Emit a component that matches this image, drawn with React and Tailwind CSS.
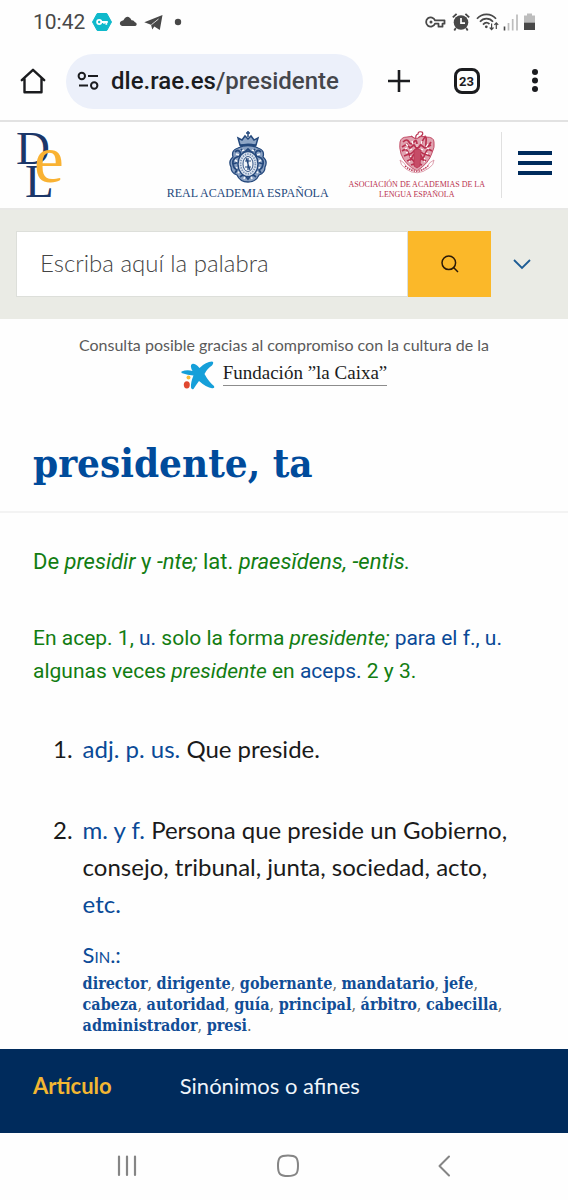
import React from "react";

const INK = "#484848";

function StatusBar() {
  return (
    <div className="flex h-11 items-center justify-between px-8 text-[#484848]">
      <div className="flex items-center gap-[7px]">
        <span className="pl-px font-['Roboto',sans-serif] text-[21px] leading-none">10:42</span>
        <svg width="20" height="20" viewBox="0 0 20 20" aria-hidden="true">
          <path d="M5.2 1.5h9.6L19.5 10l-4.7 8.5H5.2L.5 10z" fill="#0fb9cb" stroke="#0fb9cb" strokeLinejoin="round" />
          <circle cx="7.2" cy="10" r="2.1" fill="none" stroke="#fff" strokeWidth="1.8" />
          <path d="M9.4 10h6.4M14.3 10v2.7M12 10v1.8" fill="none" stroke="#fff" strokeWidth="1.8" />
        </svg>
        <svg width="18" height="20" viewBox="0 0 18 20" aria-hidden="true">
          <path d="M3 14A2.700 2.700 0 0 1 3 8.700Q4.500 8.800 5.500 6.500 8 3.500 11 6 12 7 12.500 8.300 15 8 15.700 10 18 10.500 17.700 12.500 17.300 14 15.800 14z" fill={INK} />
        </svg>
        <svg width="19" height="20" viewBox="0 0 19 20" aria-hidden="true">
          <path d="M.3 10.200 18.500 3 15.800 18 10.300 14.600 8.300 17.600 7 12.800z" fill={INK} />
          <path d="M7.300 12.800 14.500 7" stroke="#fff" strokeWidth=".8" fill="none" />
        </svg>
        <svg width="14" height="20" viewBox="0 0 14 20" aria-hidden="true">
          <circle cx="8" cy="10" r="3.200" fill={INK} />
        </svg>
      </div>
      <div className="flex items-center gap-1">
        <svg width="21" height="20" viewBox="0 0 21 20" aria-hidden="true">
          <path d="M10 8.300h9.500v3.400h-2v3h-4v-3H10A4.600 4.600 0 1 1 10 8.300z" fill="none" stroke={INK} strokeWidth="1.800" strokeLinejoin="round" />
          <circle cx="6" cy="10" r="1.500" fill={INK} />
        </svg>
        <svg width="22" height="20" viewBox="0 0 22 20" aria-hidden="true">
          <circle cx="11" cy="10.500" r="7.300" fill={INK} />
          <path d="M2.800 5.400 6.600 1.800M19.200 5.400 15.400 1.800M5.800 16 4.300 18.500M16.200 16l1.500 2.500" stroke={INK} strokeWidth="1.800" />
          <path d="M11 6v5.200h4" stroke="#fff" strokeWidth="1.700" fill="none" />
        </svg>
        <svg width="23" height="20" viewBox="0 0 23 20" aria-hidden="true">
          <path d="M1 6.800C6 .8 15 .8 20 6.800M4 9.800C7.500 5.600 13.500 5.600 17 9.800M7 12.600c2-2.300 4.500-2.300 6.500-.6" fill="none" stroke={INK} strokeWidth="1.700" />
          <circle cx="10.300" cy="14.800" r="1.400" fill={INK} />
          <path d="M15.600 11.500v6M13.700 15.500l1.900 2.100 1.900-2.100M20.300 17v-6M18.400 12.800l1.900-2 1.900 2" fill="none" stroke={INK} strokeWidth="1.200" />
        </svg>
        <svg width="16" height="20" viewBox="0 0 16 20" aria-hidden="true">
          <path d="M1.500 14.500v4" stroke={INK} strokeWidth="1.600" />
          <path d="M5.500 11v7.500M9.700 7v11.500M14 2.500v16" stroke="#bdbdbd" strokeWidth="1.700" />
        </svg>
        <svg width="13" height="20" viewBox="0 0 13 20" aria-hidden="true">
          <path d="M4 1.500h5v2h3V12H1V3.500h3z" fill="#bdbdbd" />
          <path d="M1 10.700h11v7.300H1z" fill={INK} />
        </svg>
      </div>
    </div>
  );
}

function BrowserBar() {
  return (
    <div className="flex h-[78px] items-center border-b-2 border-[#e2e2e2] pb-[2px] pl-5 pr-5 text-[#1b1c1f]">
      <button aria-label="Inicio" className="flex w-[46px] shrink-0">
        <svg width="26" height="28" viewBox="0 0 26 28" fill="none" stroke="currentColor" strokeWidth="2.400" strokeLinejoin="round" strokeLinecap="round">
          <path d="M1.800 13.200 13 2.800l11.200 10.400M4.500 11.500v13.700h17V11.500" />
        </svg>
      </button>
      <div className="flex h-[55px] min-w-0 flex-1 items-center gap-3 rounded-full bg-[#ecf0fa] pl-[11px]">
        <svg width="22" height="20" viewBox="0 0 22 20" fill="none" stroke="currentColor" strokeWidth="2" className="shrink-0" aria-hidden="true">
          <circle cx="4.800" cy="5" r="3.200" />
          <path d="M11 5h10M2 14.500h9" />
          <circle cx="17.200" cy="14.500" r="3.200" />
        </svg>
        <span className="whitespace-nowrap font-['Roboto',sans-serif] text-2xl font-medium">
          dle.rae.es<span className="text-[#44464b]">/presidente</span>
        </span>
      </div>
      <div className="flex w-[185px] shrink-0 items-center justify-between pl-6">
        <button aria-label="Nueva pestaña">
          <svg width="24" height="24" viewBox="0 0 24 24" stroke="currentColor" strokeWidth="2.600"><path d="M1 12h22M12 1v22" /></svg>
        </button>
        <button aria-label="Pestañas abiertas" className="flex size-[26px] items-center justify-center rounded-lg border-[3px] border-current font-['Roboto',sans-serif] text-[13px] font-bold leading-none">
          23
        </button>
        <button aria-label="Más opciones" className="flex w-[26px] justify-center">
          <svg width="8" height="24" viewBox="0 0 8 24" fill="currentColor"><circle cx="4" cy="3" r="3" /><circle cx="4" cy="11.500" r="3" /><circle cx="4" cy="20" r="3" /></svg>
        </button>
      </div>
    </div>
  );
}

function DleLogo() {
  return (
    <svg width="60" height="86" viewBox="0 0 60 86" role="img" aria-label="Diccionario de la lengua española" className="shrink-0 font-['Liberation_Serif',serif]">
      <text x="0" y="42" fontSize="47" fill="#1b3668">D</text>
      <text x="9" y="75" fontSize="47" fill="#1b3668">L</text>
      <text x="18" y="60" fontSize="67" fill="#f9b233">e</text>
    </svg>
  );
}

function RaeCrest() {
  return (
    <svg width="40" height="54" viewBox="0 0 40 54" aria-hidden="true" fill="none" stroke="#24487c">
      <path d="M20 1v6M18 3h4M12 15 10 8l4 2 3-4 3 3 3-3 3 4 4-2-2 7z" strokeWidth="1.500" fill="#8fa6c6" />
      <path d="M12 16q8-3 16 0" strokeWidth="2" />
      <path d="M10 18q-7 2-5 9-5 4-2 10 0 6 6 8 3 7 11 7t11-7q6-2 6-8 3-6-2-10 2-7-5-9-10-5-20 0z" fill="#8aa1c2" strokeWidth="1.300" />
      <path d="M7 22q3-3 5 0t-3 5-4 7 3 5-1 4M33 22q-3-3-5 0t3 5 4 7-3 5 1 4M12 47q4-4 8 2 4-6 8-2M5 34l6-2M35 34l-6-2M13 19l3 4 4-4 4 4 3-4" strokeWidth="1.800" />
      <path d="M8 24l3 1M7 30l3 2M8 38l3-1M32 24l-3 1M33 30l-3 2M32 38l-3-1M16 49l1-3M24 49l-1-3M14 21l2-1M26 21l-2-1M10 43l2-2M30 43l-2-2" stroke="#f1f4f9" strokeWidth="1.600" />
      <ellipse cx="20" cy="34" rx="10" ry="12.500" fill="#dbe3ee" strokeWidth="1.400" />
      <ellipse cx="20" cy="34" rx="7.400" ry="9.900" stroke="#7890b3" strokeWidth="1.700" strokeDasharray="1.300 1.200" />
      <ellipse cx="20" cy="34" rx="5" ry="7.500" fill="#f3f6fa" strokeWidth=".9" />
      <path d="M20 28v12M17 31h6M17 37h6M18 28l4 12" strokeWidth="1.200" />
    </svg>
  );
}

function AsaleCrest() {
  return (
    <svg width="40" height="46" viewBox="0 0 40 46" aria-hidden="true" fill="none" stroke="#b9314f">
      <path d="M19 9Q18 5 21 4q0-3 4-2 2 2-1 4-3 1-3 3M14 6l4 3M25 7l4-1" strokeWidth="1.200" />
      <path d="M3 12q1-5 7-5 4-2 9 2 5-4 10-2 8 0 8 5 1 5-2 11-3 10-15 18Q8 35 4 24 2 17 3 12z" fill="#e0a3b0" strokeWidth=".8" />
      <path d="M6 12q4-4 6 0t5 0 3 3 5-3 4 0 5 0M5 17l5-3 3 4 4-3 3 4 4-4 4 3 6-3M5 21q5-3 6 1t5 0l3-3M35 21q-5-3-6 1t-5 0M7 26l5-2 2 5 3-5M33 26l-5-2-2 5-3-5M10 31l5-2 4 5 5-5 5 2M14 35l6-2 5 2" strokeWidth="1.700" />
      <path d="M17 20q3-2 7 0l-1 16-3 2-3-2z" fill="#c64c67" strokeWidth=".8" />
      <path d="M9 14l2 2M15 11l1 3M25 11l-1 3M31 14l-2 3M8 19l2-1M9 23l2-1M32 19l-2-1M31 24l-2-1M13 27l1-1M27 28l1 1M20 14v3M13 20l2-1M26 20l-2-1M12 32l1-1M28 32l-1-1" stroke="#fff" strokeWidth="1.300" />
      <path d="M3 30q0 5 6 9 11 8 23-1 5-3 5-8-5 2-7 7-10 7-20 0-3-5-7-7z" fill="#fff" stroke="#d5899a" strokeWidth=".8" />
      <path d="M8 36q12 11 24-1" strokeWidth="1.300" strokeDasharray="1.300 1.200" />
    </svg>
  );
}

function SiteHeader() {
  return (
    <header className="flex h-22 items-center border-b-2 border-[#e8e8e6] px-4">
      <a href="#inicio"><DleLogo /></a>
      <div className="flex flex-1 items-start justify-end gap-5">
        <a href="#rae" className="flex flex-col items-center whitespace-nowrap font-['Liberation_Serif',serif] text-[12px] leading-4 text-[#24487c]">
          <RaeCrest />
          <span className="pt-px">REAL ACADEMIA ESPAÑOLA</span>
        </a>
        <a href="#asale" className="flex flex-col items-center whitespace-nowrap text-center font-['Liberation_Serif',serif] text-[8px] leading-[10px] text-[#b9314f]">
          <AsaleCrest />
          <span className="mt-1">ASOCIACIÓN DE ACADEMIAS DE LA<br />LENGUA ESPAÑOLA</span>
        </a>
      </div>
      <div className="ml-4 flex h-[66px] items-center border-l border-[#e0e0e0] pb-1 pl-4">
        <button aria-label="Menú" className="flex w-[34px] flex-col gap-[6px]">
          <span className="h-1 w-full bg-[#002b5c]" />
          <span className="h-1 w-full bg-[#002b5c]" />
          <span className="h-1 w-full bg-[#002b5c]" />
        </button>
      </div>
    </header>
  );
}

function SearchBar() {
  return (
    <form className="flex h-[109px] items-center bg-[#eaebe5] pb-[2px] pl-4 pr-9" onSubmit={(e) => e.preventDefault()}>
      <input aria-label="Escriba aquí la palabra" placeholder="Escriba aquí la palabra" className="h-[66px] min-w-0 flex-1 border border-[#dddfda] bg-white pb-[2px] pl-[23px] font-['Lato',sans-serif] text-2xl font-light text-[#444] outline-none placeholder:text-[#444]" />
      <button aria-label="Buscar" className="flex h-[66px] w-[83px] shrink-0 items-center justify-center bg-[#fbb829]">
        <svg width="20" height="20" viewBox="0 0 20 20" fill="none" stroke="#2b1a08" strokeWidth="1.500"><circle cx="8.800" cy="8.800" r="6.800" /><path d="M13.300 13.300 18 18" /></svg>
      </button>
      <button type="button" aria-label="Más opciones de búsqueda" className="ml-[21px] shrink-0">
        <svg width="20" height="14" viewBox="0 0 20 14" fill="none" stroke="#1d5c94" strokeWidth="1.800"><path d="m2 3 8 8 8-8" /></svg>
      </button>
    </form>
  );
}

function Sponsor() {
  return (
    <div className="flex flex-col items-center pt-[14px] font-['Lato',sans-serif] text-[#5a5a5a]">
      <p className="whitespace-nowrap text-base leading-6">Consulta posible gracias al compromiso con la cultura de la</p>
      <a href="#fundacion" className="flex items-start gap-2 text-[#1c1c1c]">
        <svg width="34" height="30" viewBox="0 0 34 30" className="mt-1" aria-hidden="true">
          <path d="M.5 10.500Q6 8.500 11.500 10 8.500 4.500 11 3q3-1 7.500 4Q25 .500 31 .500q2.500.500 0 4-5 3-7.500 8.500 4 7.500 9.500 12 1 2.500-2 2.200-5.500-.5-13-7.200-3 4-5.500 8-2 1-2.500-1.500-.5-5 2.500-12Q7 14 .5 12z" fill="#159fd9" />
          <circle cx="7.500" cy="16.500" r="2" fill="#f7bd3a" />
          <ellipse cx="5.800" cy="23.800" rx="3" ry="3.600" fill="#e0482f" />
        </svg>
        <span className="mt-1 whitespace-nowrap border-b border-[#8c8c8c] font-['Liberation_Serif',serif] text-[19px] leading-[24px]">Fundación ”la Caixa”</span>
      </a>
    </div>
  );
}

const synonyms = ["director", "dirigente", "gobernante", "mandatario", "jefe", "cabeza", "autoridad", "guía", "principal", "árbitro", "cabecilla", "administrador", "presi"];

function Abbr({ children }) {
  return <span className="text-[#0a4a97]">{children}</span>;
}

function Article() {
  return (
    <article>
      <h1 className="border-b-2 border-[#f3f3f3] px-[33px] pb-5 pt-11 font-['DejaVu_Serif_Condensed','Liberation_Serif',serif] text-[40px] font-bold leading-[56px] text-[#004b9b]">presidente, ta</h1>
      <div className="px-[33px] pt-8 font-['Roboto',sans-serif] leading-[33px] text-[#127d12]">
        <p className="text-[22px]">De <i>presidir</i> y <i>-nte;</i> lat. <i>praesĭdens, -entis.</i></p>
        <p className="mt-11 text-[21px]">En acep. 1, <Abbr>u.</Abbr> solo la forma <i>presidente;</i> <Abbr>para el f., u.</Abbr> algunas veces <i>presidente</i> en <Abbr>aceps.</Abbr> 2 y 3.</p>
      </div>
      <ol className="mt-[42px] flex flex-col gap-11 pl-[53px] pr-12 font-['Lato',sans-serif] text-2xl leading-[37px] text-[#1a1a1a]">
        <li className="flex gap-[10px]"><span>1.</span><p><Abbr>adj. p. us.</Abbr> Que preside.</p></li>
        <li className="flex gap-[10px]">
          <span>2.</span>
          <div>
            <p><Abbr>m. y f.</Abbr> Persona que preside un Gobierno, consejo, tribunal, junta, sociedad, acto, <Abbr>etc.</Abbr></p>
            <p className="mt-4 text-[22px] leading-[33px] text-[#0a4a97] [font-variant:small-caps]">Sin.:</p>
            <p className="mt-[2px] font-['DejaVu_Serif_Condensed','Liberation_Serif',serif] text-base leading-[21px] text-[#666]">
              {synonyms.map((word, i) => (
                <React.Fragment key={word}>
                  <a href={"#" + word} className="font-bold text-[#114d96]">{word}</a>
                  {i < synonyms.length - 1 ? ", " : "."}
                </React.Fragment>
              ))}
            </p>
          </div>
        </li>
      </ol>
    </article>
  );
}

function BottomTabs() {
  return (
    <nav className="mt-[13px] flex h-[84px] items-start gap-[68px] bg-[#002b5c] px-[33px] pt-[21px] font-['Lato',sans-serif] text-[22px] leading-8">
      <a href="#articulo" className="font-bold text-[#f2b632]">Artículo</a>
      <a href="#sinonimos" className="text-[#eef4fa]">Sinónimos o afines</a>
    </nav>
  );
}

function SystemNav() {
  return (
    <div className="flex h-[66px] items-center justify-between pl-[116px] pr-[117px] text-[#858585]">
      <button aria-label="Recientes"><svg width="22" height="24" viewBox="0 0 22 24" stroke="currentColor" strokeWidth="2.200" strokeLinecap="round"><path d="M3 2.500v18.500M11 2.500v18.500M19 2.500v18.500" /></svg></button>
      <button aria-label="Inicio del sistema"><svg width="24" height="24" viewBox="0 0 24 24" fill="none" stroke="currentColor" strokeWidth="2"><path d="M12 1.500c8 0 10 2 10 10.200S20 22 12 22 2 20 2 11.700 4 1.500 12 1.500z" /></svg></button>
      <button aria-label="Atrás"><svg width="14" height="24" viewBox="0 0 14 24" fill="none" stroke="currentColor" strokeWidth="2" strokeLinecap="round" strokeLinejoin="round"><path d="M12 2.500 2.500 12 12 21.500" /></svg></button>
    </div>
  );
}

export default function App() {
  return (
    <div className="min-h-screen bg-[#fefefe]">
      <StatusBar />
      <BrowserBar />
      <SiteHeader />
      <SearchBar />
      <main>
        <Sponsor />
        <Article />
      </main>
      <BottomTabs />
      <SystemNav />
    </div>
  );
}
